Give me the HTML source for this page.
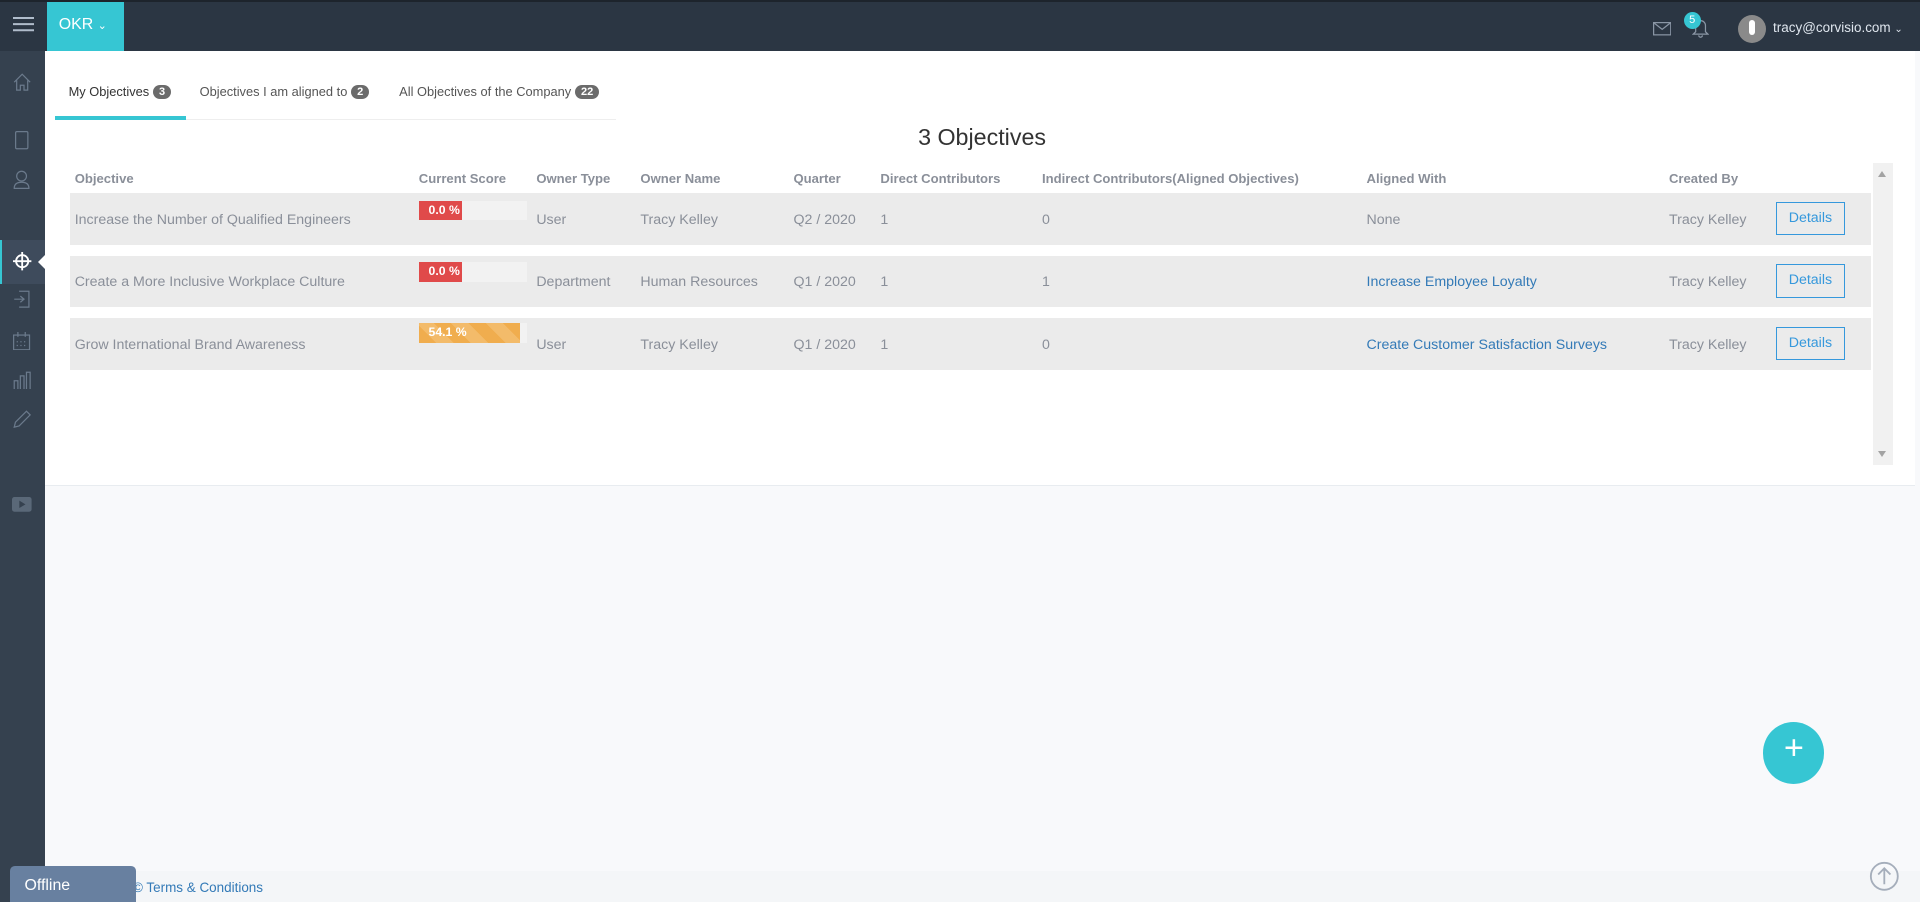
<!DOCTYPE html>
<html><head><meta charset="utf-8"><style>
html,body{margin:0;padding:0;overflow:hidden;background:#f8f9fb}
#w{position:relative;width:1568px;height:737px;zoom:1.22449;font-family:"Liberation Sans",sans-serif;background:#f8f9fb;overflow:hidden}
.a{position:absolute}
.top{left:0;top:0;width:1568px;height:42px;background:#2b3643;border-top:2px solid #1d242c;box-sizing:border-box}
.side{left:0;top:42px;width:37px;height:695px;background:#35414f}
.panel{left:37px;top:42px;width:1527px;height:354px;background:#fff;border-bottom:1px solid #e8ecf0}
.tab{font-size:10.5px;color:#555;top:69px}
.badge{display:inline-block;background:#6b6b6b;color:#fff;border-radius:8px;font-size:9px;font-weight:bold;padding:1px 5px;margin-left:3px;vertical-align:1px}
.th{top:140px;font-size:10.7px;color:#8a8f99;font-weight:bold}
.row{left:57px;width:1471px;height:42px;background:#ebebeb}
.c{font-size:11.6px;color:#8a8f99}
.lnk{color:#337ab7}
.btn{width:57px;height:27px;border:1px solid #3598dc;color:#3598dc;font-size:11.6px;text-align:center;line-height:26px;box-sizing:border-box}
.bar{width:88px;height:16px;background:#f2f2f2}
.bar div{height:16px;color:#fff;font-size:10px;font-weight:bold;line-height:16px;padding-left:8px;box-sizing:border-box}
</style></head><body><div id="w">
<div class="a top"></div>
<div class="a" style="left:11px;top:14px;width:17px;height:1.5px;background:#b0bccb;box-shadow:0 5px 0 #b0bccb,0 10px 0 #b0bccb"></div>
<div class="a" style="left:38px;top:2px;width:63px;height:40px;background:#36c6d3;color:#fff;font-size:13px;line-height:38px;text-indent:10px">OKR <span style="font-size:9px">&#8964;</span></div>
<svg class="a" style="left:1350px;top:18px" width="15" height="11" viewBox="0 0 15 11"><rect x=".5" y=".5" width="14" height="10" fill="none" stroke="#8a96a5"/><path d="M.5 .5 7.5 6 14.5 .5" fill="none" stroke="#8a96a5"/></svg>
<svg class="a" style="left:1382px;top:14px" width="14" height="17" viewBox="0 0 14 17"><path d="M3 12V7a4 4 0 0 1 8 0v5l2 2H1z M5.5 15a1.5 1.5 0 0 0 3 0" fill="none" stroke="#8a96a5"/></svg>
<div class="a" style="left:1375px;top:10px;width:14px;height:14px;border-radius:7px;background:#36c6d3;color:#fff;font-size:9px;text-align:center;line-height:14px">5</div>
<div class="a" style="left:1419px;top:12px;width:23px;height:23px;border-radius:12px;background:#8a8a8a"></div>
<div class="a" style="left:1428px;top:16px;width:5px;height:13px;border-radius:3px;background:#fff"></div>
<div class="a" style="left:1448px;top:16px;font-size:11px;color:#dfe6ee">tracy@corvisio.com <span style="font-size:8px">&#8964;</span></div>
<div class="a side"></div>
<div class="a" style="left:0;top:196px;width:37px;height:36px;background:#3e4b5c;border-left:2px solid #36c6d3;box-sizing:border-box"></div>
<div class="a" style="left:31px;top:208px;width:0;height:0;border:6px solid transparent;border-right-color:#fff;border-left:0"></div>
<svg class="a" style="left:11px;top:60px" width="15" height="15" viewBox="0 0 15 15" fill="none" stroke="#6b7a8c"><path d="M1 7.5 7.5 1 14 7.5M3 6v8h3v-4h3v4h3V6"/></svg>
<svg class="a" style="left:12px;top:107px" width="12" height="16" fill="none" stroke="#6b7a8c"><rect x=".5" y=".5" width="10" height="14" rx="1"/></svg>
<svg class="a" style="left:11px;top:139px" width="15" height="16" fill="none" stroke="#6b7a8c"><circle cx="7" cy="5" r="4"/><path d="M1 15c0-4 3-5 6-5s6 1 6 5z"/></svg>
<svg class="a" style="left:11px;top:206px" width="15" height="15" fill="none" stroke="#fff" stroke-width="1.5"><circle cx="7.5" cy="7.5" r="5"/><path d="M7.5 0v15M0 7.5h15"/></svg>
<svg class="a" style="left:11px;top:237px" width="14" height="15" fill="none" stroke="#6b7a8c"><path d="M5 1h8v13H5M1 7.5h8M6 5l3 2.5L6 10"/></svg>
<svg class="a" style="left:11px;top:271px" width="15" height="15" fill="none" stroke="#6b7a8c"><rect x=".5" y="2.5" width="13" height="12"/><path d="M4 0v4M10 0v4M3 8h1M6 8h1M9 8h1M3 11h1M6 11h1M9 11h1"/></svg>
<svg class="a" style="left:11px;top:303px" width="15" height="15" fill="none" stroke="#6b7a8c"><path d="M1 15V8h3v7M6 15V4h3v11M11 15V1h3v14"/></svg>
<svg class="a" style="left:11px;top:335px" width="15" height="15" fill="none" stroke="#6b7a8c"><path d="M1 14l1-4L11 1l3 3-9 9z"/></svg>
<svg class="a" style="left:10px;top:406px" width="16" height="12"><rect width="16" height="12" rx="2" fill="#5a6878"/><path d="M6 3v6l5-3z" fill="#35414f"/></svg>
<div class="a panel"></div>
<div class="a tab" style="left:56px;color:#333">My Objectives<span class="badge">3</span></div>
<div class="a tab" style="left:163px">Objectives I am aligned to<span class="badge">2</span></div>
<div class="a tab" style="left:326px">All Objectives of the Company<span class="badge">22</span></div>
<div class="a" style="left:45px;top:97px;width:458px;height:1px;background:#eee"></div>
<div class="a" style="left:45px;top:95px;width:107px;height:3px;background:#36c6d3"></div>
<div class="a" style="left:700px;top:101px;width:204px;text-align:center;font-size:19px;color:#333">3 Objectives</div>
<div class="a" style="left:1530px;top:133px;width:16px;height:247px;background:#f1f1f1"></div>
<div class="a" style="left:1534px;top:140px;border:4px solid transparent;border-bottom:5px solid #a3a3a3;border-top:0"></div>
<div class="a" style="left:1534px;top:368px;border:4px solid transparent;border-top:5px solid #a3a3a3;border-bottom:0"></div>
<div class="a th" style="left:61px">Objective</div><div class="a th" style="left:342px">Current Score</div><div class="a th" style="left:438px">Owner Type</div><div class="a th" style="left:523px">Owner Name</div><div class="a th" style="left:648px">Quarter</div><div class="a th" style="left:719px">Direct Contributors</div><div class="a th" style="left:851px">Indirect Contributors(Aligned Objectives)</div><div class="a th" style="left:1116px">Aligned With</div><div class="a th" style="left:1363px">Created By</div>

<div class="a row" style="top:158px"></div><div class="a row" style="top:209px"></div><div class="a row" style="top:260px"></div>

<div class="a c" style="left:61px;top:173px">Increase the Number of Qualified Engineers</div>
<div class="a bar" style="left:342px;top:164px"><div style="width:35px;background:#e04a4a">0.0 %</div></div>
<div class="a c" style="left:438px;top:173px">User</div><div class="a c" style="left:523px;top:173px">Tracy Kelley</div><div class="a c" style="left:648px;top:173px">Q2 / 2020</div><div class="a c" style="left:719px;top:173px">1</div><div class="a c" style="left:851px;top:173px">0</div><div class="a c" style="left:1116px;top:173px">None</div><div class="a c" style="left:1363px;top:173px">Tracy Kelley</div>
<div class="a btn" style="left:1450px;top:165px">Details</div>

<div class="a c" style="left:61px;top:224px">Create a More Inclusive Workplace Culture</div>
<div class="a bar" style="left:342px;top:214px"><div style="width:35px;background:#e04a4a">0.0 %</div></div>
<div class="a c" style="left:438px;top:224px">Department</div><div class="a c" style="left:523px;top:224px">Human Resources</div><div class="a c" style="left:648px;top:224px">Q1 / 2020</div><div class="a c" style="left:719px;top:224px">1</div><div class="a c" style="left:851px;top:224px">1</div><div class="a c lnk" style="left:1116px;top:224px">Increase Employee Loyalty</div><div class="a c" style="left:1363px;top:224px">Tracy Kelley</div>
<div class="a btn" style="left:1450px;top:216px">Details</div>

<div class="a c" style="left:61px;top:275px">Grow International Brand Awareness</div>
<div class="a bar" style="left:342px;top:264px"><div style="width:83px;background:repeating-linear-gradient(45deg,#f0ad4e 0 10px,#f3bb6a 10px 20px)">54.1 %</div></div>
<div class="a c" style="left:438px;top:275px">User</div><div class="a c" style="left:523px;top:275px">Tracy Kelley</div><div class="a c" style="left:648px;top:275px">Q1 / 2020</div><div class="a c" style="left:719px;top:275px">1</div><div class="a c" style="left:851px;top:275px">0</div><div class="a c lnk" style="left:1116px;top:275px">Create Customer Satisfaction Surveys</div><div class="a c" style="left:1363px;top:275px">Tracy Kelley</div>
<div class="a btn" style="left:1450px;top:267px">Details</div>

<div class="a" style="left:1440px;top:590px;width:50px;height:50px;border-radius:25px;background:#36c6d3;color:#fff;font-size:28px;text-align:center;line-height:44px">+</div>
<div class="a" style="left:37px;top:711px;width:1531px;height:26px;background:#f4f6f8"></div>
<div class="a" style="left:97px;top:719px;font-size:11px;color:#337ab7">io © Terms &amp; Conditions</div>
<div class="a" style="left:8px;top:707px;width:103px;height:30px;background:#6880a0;border-radius:4px 4px 0 0;color:#fff;font-size:13px;line-height:32px;text-indent:12px">Offline</div>
<svg class="a" style="left:1526px;top:703px" width="25" height="25" fill="none" stroke="#a5aebb" stroke-width="1.5"><circle cx="12.5" cy="12.5" r="11"/><path d="M12.5 19V6M7.5 11l5-5 5 5"/></svg>
</div></body></html>
